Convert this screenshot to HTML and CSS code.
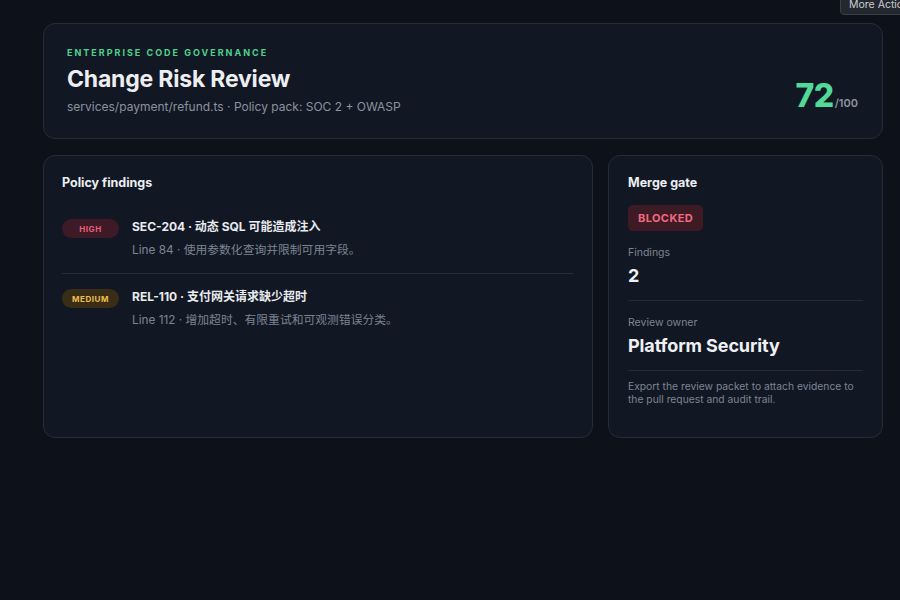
FILE: index.html
```html
<!DOCTYPE html>
<html lang="en">
<head>
<meta charset="utf-8">
<title>Change Risk Review</title>
<link rel="stylesheet" href="styles.css">
</head>
<body>
<div class="tooltip">More Actions</div>
<main class="page">
  <header class="card hero">
    <div class="hero-text">
      <div class="eyebrow">ENTERPRISE CODE GOVERNANCE</div>
      <h1 class="title">Change Risk Review</h1>
      <div class="subtitle">services/payment/refund.ts · Policy pack: SOC 2 + OWASP</div>
    </div>
    <div class="score"><span class="score-num">72</span><span class="score-max">/100</span></div>
  </header>

  <section class="grid">
    <div class="card findings">
      <h2 class="card-title">Policy findings</h2>
      <div class="item">
        <span class="sev sev-high">HIGH</span>
        <div class="item-body">
          <div class="item-title">SEC-204 · 动态 SQL 可能造成注入</div>
          <div class="item-desc">Line 84 · 使用参数化查询并限制可用字段。</div>
        </div>
      </div>
      <div class="item">
        <span class="sev sev-med">MEDIUM</span>
        <div class="item-body">
          <div class="item-title">REL-110 · 支付网关请求缺少超时</div>
          <div class="item-desc">Line 112 · 增加超时、有限重试和可观测错误分类。</div>
        </div>
      </div>
    </div>

    <aside class="card gate">
      <h2 class="card-title">Merge gate</h2>
      <div class="blocked">BLOCKED</div>
      <div class="stat">
        <div class="stat-label">Findings</div>
        <div class="stat-value">2</div>
      </div>
      <div class="stat">
        <div class="stat-label">Review owner</div>
        <div class="stat-value big">Platform Security</div>
      </div>
      <p class="note">Export the review packet to attach evidence to the pull request and audit trail.</p>
    </aside>
  </section>
</main>
</body>
</html>
```

FILE: styles.css
```css
* { box-sizing: border-box; }
html, body { margin: 0; padding: 0; }
body {
  background: #0d1119;
  font-family: Inter, "Noto Sans", "Noto Sans CJK SC", sans-serif;
  color: #e6e8ec;
  width: 900px;
  height: 600px;
  overflow: hidden;
  position: relative;
}
.page {
  width: 840px;
  margin-left: 43px;
  padding-top: 23px;
  display: flex;
  flex-direction: column;
  gap: 16px;
}
.card {
  background: #121823;
  border: 1px solid #252c38;
  border-radius: 12px;
}
.hero {
  height: 116px;
  padding: 0 24px 23px 23px;
  display: flex;
  justify-content: space-between;
  align-items: flex-end;
}
.eyebrow {
  font-size: 9px;
  font-weight: 700;
  letter-spacing: 2px;
  color: #4fd18b;
  line-height: 12px;
}
.title {
  margin: 6px 0 0;
  font-size: 23px;
  font-weight: 700;
  line-height: 29px;
  color: #eceef2;
  letter-spacing: -0.2px;
}
.subtitle {
  margin-top: 5px;
  font-size: 12px;
  line-height: 16px;
  color: #8a92a0;
}
.score {
  display: flex;
  align-items: baseline;
  line-height: 1;
  margin-bottom: 3px;
}
.score-num {
  font-size: 32px;
  font-weight: 800;
  color: #52d898;
  letter-spacing: -0.5px;
}
.score-max {
  font-size: 11px;
  font-weight: 600;
  color: #8a92a0;
  margin-left: 1px;
}
.grid {
  display: grid;
  grid-template-columns: 2fr 1fr;
  gap: 15px;
}
.findings, .gate {
  height: 283px;
  padding: 18px 19px 18px 18px;
}
.gate { padding-left: 19px; }
.card-title {
  margin: 0;
  font-size: 12.5px;
  font-weight: 700;
  line-height: 18px;
  color: #eceef2;
}
.findings .card-title { margin-bottom: 12px; }
.item {
  display: flex;
  align-items: flex-start;
  gap: 13px;
  padding: 14px 0;
}
.item + .item { border-top: 1px solid #252c38; }
.sev {
  flex: 0 0 57px;
  height: 19px;
  margin-top: 1px;
  border-radius: 10px;
  font-size: 8px;
  font-weight: 700;
  letter-spacing: 0.6px;
  display: flex;
  align-items: center;
  justify-content: center;
}
.sev-high { background: #3d1a25; color: #ee5f7c; }
.sev-med { background: #3a2d16; color: #eebf4c; }
.item-title {
  font-size: 12px;
  font-weight: 700;
  line-height: 18px;
  color: #e8eaee;
}
.item-desc {
  margin-top: 5px;
  font-size: 11.8px;
  line-height: 18px;
  color: #7c8493;
}
.blocked {
  display: inline-block;
  margin-top: 13px;
  height: 26px;
  padding: 0 10px;
  border-radius: 5px;
  background: #3d1a24;
  color: #f06a82;
  font-size: 11px;
  font-weight: 700;
  letter-spacing: 0.4px;
  line-height: 26px;
}
.stat {
  padding-bottom: 13px;
  border-bottom: 1px solid #252c38;
  margin-top: 15px;
}
.stat-label {
  font-size: 10.5px;
  line-height: 14px;
  color: #7c8493;
}
.stat-value {
  margin-top: 5px;
  font-size: 18px;
  font-weight: 700;
  line-height: 22px;
  color: #eef0f3;
}
.stat-value.big { letter-spacing: -0.1px; }
.note {
  margin: 9px 0 0;
  font-size: 10.3px;
  line-height: 13px;
  color: #7c8493;
}
.tooltip {
  position: absolute;
  top: -8px;
  left: 840px;
  padding: 6px 10px 3px 8px;
  background: #23272e;
  border: 1px solid #3a3e46;
  border-radius: 4px;
  font-size: 10.5px;
  line-height: 12px;
  color: #c9ccd2;
  white-space: nowrap;
}
```
